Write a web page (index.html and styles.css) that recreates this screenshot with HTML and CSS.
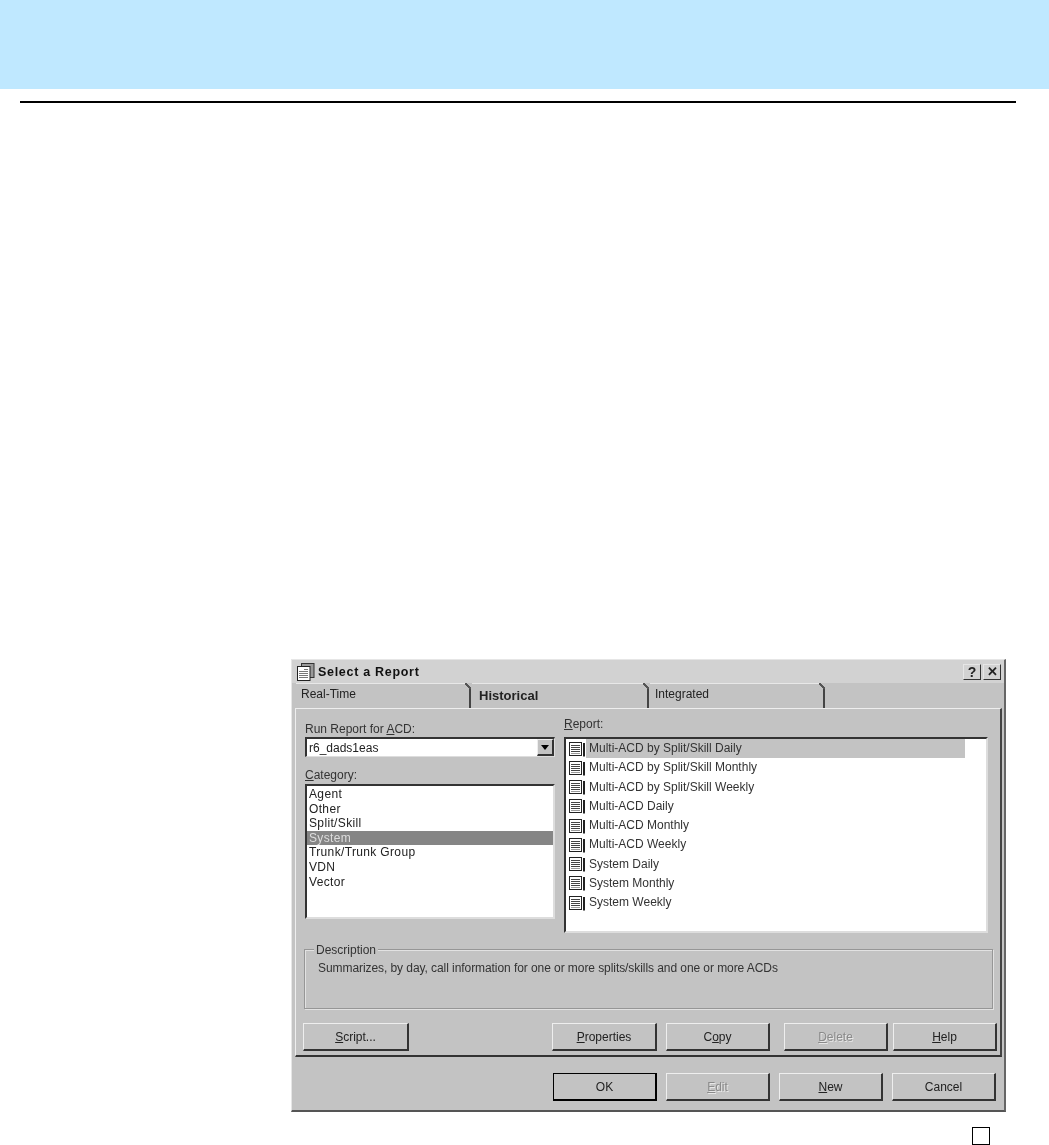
FILE: index.html
```html
<!DOCTYPE html>
<html lang="en">
<head>
  <meta charset="UTF-8" />
  <title>Select a Report</title>
  <link rel="stylesheet" href="styles.css">
</head>
<body>
  <svg class="icon-defs" width="0" height="0" aria-hidden="true">
    <symbol id="report-icon" viewBox="0 0 16 16">
      <rect x="0.5" y="1.5" width="12" height="13" fill="#fff" stroke="#222"/>
      <path d="M2 4.5h9M2 6.5h9M2 8.5h9M2 10.5h9" stroke="#444" fill="none"/>
      <path d="M2 12.5h9" stroke="#999" fill="none"/>
      <path d="M15 2v13.5" stroke="#222" stroke-width="2" fill="none"/>
    </symbol>
  </svg>

  <header class="band"></header>
  <hr class="rule">

  <section class="dialog">
    <div class="title-bar">
      <svg class="title-icon" viewBox="0 0 18 18">
        <rect x="4.5" y="0.5" width="12.5" height="14" fill="#999" stroke="#333"/>
        <rect x="0.5" y="3.5" width="12.5" height="14" fill="#fff" stroke="#222"/>
        <path d="M7 6.5h4M2 8.5h9M2 10.5h9M2 12.5h9M2 14.5h9" stroke="#777" fill="none"/>
      </svg>
      <span class="title-text">Select a Report</span>
      <span class="title-btn">?</span>
      <span class="title-btn title-close">✕</span>
    </div>

    <nav class="tabs">
      <div class="tab">Real-Time</div>
      <div class="tab tab-active">Historical</div>
      <div class="tab">Integrated</div>
    </nav>

    <div class="panel">
      <div class="columns">
        <div class="col-left">
          <label class="field-label">Run Report for <u>A</u>CD:</label>
          <div class="combo">
            <span class="combo-value">r6_dads1eas</span>
            <span class="combo-arrow"></span>
          </div>
          <label class="field-label category-label"><u>C</u>ategory:</label>
          <ul class="list category-list">
            <li>Agent</li>
            <li>Other</li>
            <li>Split/Skill</li>
            <li class="selected">System</li>
            <li>Trunk/Trunk Group</li>
            <li>VDN</li>
            <li>Vector</li>
          </ul>
        </div>
        <div class="col-right">
          <label class="field-label report-label"><u>R</u>eport:</label>
          <ul class="list report-list">
            <li class="selected"><svg class="row-icon"><use href="#report-icon"/></svg><span>Multi-ACD by Split/Skill Daily</span></li>
            <li><svg class="row-icon"><use href="#report-icon"/></svg><span>Multi-ACD by Split/Skill Monthly</span></li>
            <li><svg class="row-icon"><use href="#report-icon"/></svg><span>Multi-ACD by Split/Skill Weekly</span></li>
            <li><svg class="row-icon"><use href="#report-icon"/></svg><span>Multi-ACD Daily</span></li>
            <li><svg class="row-icon"><use href="#report-icon"/></svg><span>Multi-ACD Monthly</span></li>
            <li><svg class="row-icon"><use href="#report-icon"/></svg><span>Multi-ACD Weekly</span></li>
            <li><svg class="row-icon"><use href="#report-icon"/></svg><span>System Daily</span></li>
            <li><svg class="row-icon"><use href="#report-icon"/></svg><span>System Monthly</span></li>
            <li><svg class="row-icon"><use href="#report-icon"/></svg><span>System Weekly</span></li>
          </ul>
        </div>
      </div>

      <div class="group">
        <span class="group-legend">Description</span>
        <p class="group-text">Summarizes, by day, call information for one or more splits/skills and one or more ACDs</p>
      </div>

      <div class="button-row">
        <button class="btn btn-script"><u>S</u>cript...</button>
        <button class="btn btn-properties"><u>P</u>roperties</button>
        <button class="btn btn-copy">C<u>o</u>py</button>
        <button class="btn btn-delete" disabled><u>D</u>elete</button>
        <button class="btn btn-help"><u>H</u>elp</button>
      </div>
    </div>

    <div class="dialog-actions">
      <button class="btn btn-default">OK</button>
      <button class="btn" disabled><u>E</u>dit</button>
      <button class="btn"><u>N</u>ew</button>
      <button class="btn">Cancel</button>
    </div>
  </section>

  <div class="page-box"></div>
</body>
</html>
```

FILE: styles.css
```css
html, body {
  margin: 0;
  padding: 0;
}

body {
  height: 1145px;
  overflow: hidden;
  background: #fff;
  font-family: "Liberation Sans", Arial, sans-serif;
  font-size: 12px;
  color: #222;
}

.icon-defs {
  display: block;
  height: 0;
}

.band {
  height: 89px;
  background-color: #bfe8ff;
}

.rule {
  height: 2px;
  margin: 12px 33px 0 20px;
  border: none;
  background: #000;
}

.dialog {
  box-sizing: border-box;
  width: 715px;
  height: 453px;
  margin: 556px 0 0 291px;
  background: #c3c3c3;
  border-top: 1px solid #e6e6e6;
  border-left: 1px solid #e6e6e6;
  border-right: 2px solid #666;
  border-bottom: 2px solid #555;
  filter: blur(0.35px);
}

.title-bar {
  display: flex;
  align-items: center;
  height: 23px;
  padding: 0 3px 0 5px;
  background: #d2d2d2;
}

.title-icon {
  width: 18px;
  height: 18px;
  margin-right: 3px;
}

.title-text {
  flex: 1;
  font-size: 12.5px;
  font-weight: bold;
  letter-spacing: 0.7px;
  color: #111;
}

.title-btn {
  box-sizing: border-box;
  width: 18px;
  height: 16px;
  margin-left: 2px;
  text-align: center;
  line-height: 14px;
  font-weight: bold;
  font-size: 14px;
  background: #d2d2d2;
  border-top: 1px solid #e6e6e6;
  border-left: 1px solid #e6e6e6;
  border-right: 1px solid #333;
  border-bottom: 1px solid #333;
}

.title-close {
  font-size: 13px;
}

.tabs {
  display: flex;
  height: 25px;
  padding-left: 4px;
}

.tab {
  position: relative;
  box-sizing: border-box;
  width: 175px;
  height: 25px;
  margin-right: 1px;
  padding: 3px 0 0 5px;
  background: #c3c3c3;
  border-top: 1px solid #e8e8e8;
  border-right: 2px solid #444;
  font-size: 12px;
}

.tab::after {
  content: "";
  position: absolute;
  top: -1px;
  right: -2px;
  width: 6px;
  height: 6px;
  background: linear-gradient(45deg, transparent 38%, #555 38%, #555 62%, #c3c3c3 62%);
}

.tab-active {
  width: 177px;
  padding: 4px 0 0 7px;
  font-size: 13px;
  font-weight: bold;
}

.panel {
  box-sizing: border-box;
  height: 349px;
  margin: 0 2px 0 3px;
  padding: 7px 12px 0 9px;
  border-top: 1px solid #eee;
  border-left: 1px solid #eee;
  border-right: 2px solid #444;
  border-bottom: 2px solid #333;
}

.columns {
  display: grid;
  grid-template-columns: 250px 424px;
  column-gap: 9px;
  height: 217px;
}

.field-label {
  display: block;
  line-height: 16px;
  font-size: 12px;
  color: #333;
}

.col-left {
  padding-top: 5px;
}

.report-label {
  height: 21px;
}

.category-label {
  height: 18px;
  margin-top: 9px;
  padding-top: 1px;
  box-sizing: border-box;
}

.combo {
  box-sizing: border-box;
  display: flex;
  align-items: center;
  justify-content: space-between;
  height: 20px;
  background: #fff;
  border-top: 2px solid #333;
  border-left: 2px solid #333;
  border-right: 1px solid #ddd;
  border-bottom: 1px solid #ddd;
}

.combo-value {
  padding-left: 2px;
}

.combo-arrow {
  box-sizing: border-box;
  position: relative;
  width: 17px;
  height: 17px;
  background: #c3c3c3;
  border-top: 1px solid #eee;
  border-left: 1px solid #eee;
  border-right: 2px solid #333;
  border-bottom: 2px solid #333;
}

.combo-arrow::after {
  content: "";
  position: absolute;
  top: 5px;
  left: 3px;
  border-top: 5px solid #000;
  border-left: 4px solid transparent;
  border-right: 4px solid transparent;
}

.list {
  box-sizing: border-box;
  margin: 0;
  padding: 0;
  list-style: none;
  background: #fff;
  border-top: 2px solid #333;
  border-left: 2px solid #333;
  border-right: 2px solid #ddd;
  border-bottom: 2px solid #ddd;
}

.category-list {
  height: 135px;
  padding-top: 1px;
  letter-spacing: 0.35px;
}

.category-list li {
  height: 14.6px;
  line-height: 14.6px;
  padding-left: 2px;
}

.category-list .selected {
  background: #858585;
  color: #ddd;
}

.report-list {
  height: 196px;
}

.report-list li {
  display: flex;
  align-items: center;
  height: 19.25px;
  padding-left: 3px;
  color: #333;
}

.report-list .selected span {
  background: #c3c3c3;
}

.report-list .selected {
  margin-right: 21px;
  background: linear-gradient(90deg, #fff 20px, #c3c3c3 20px);
}

.report-list span {
  line-height: 19px;
  padding-left: 1px;
}

.row-icon {
  width: 16px;
  height: 16px;
  margin-right: 3px;
}

.group {
  position: relative;
  box-sizing: border-box;
  width: 689px;
  height: 60px;
  margin: 16px 0 0 -1px;
  padding: 10px 0 0 13px;
  border: 1px solid #969696;
  box-shadow: inset 1px 1px 0 #e2e2e2, 1px 1px 0 #e2e2e2;
}

.group-legend {
  position: absolute;
  top: -7px;
  left: 9px;
  padding: 0 2px;
  background: #c3c3c3;
  color: #333;
}

.group-text {
  margin: 0;
  line-height: 16px;
  letter-spacing: -0.07px;
  color: #333;
}

.button-row {
  display: flex;
  margin: 14px 0 0 -2px;
}

.dialog-actions {
  display: flex;
  gap: 9px;
  padding: 16px 0 0 261px;
}

.btn {
  flex: none;
  box-sizing: border-box;
  width: 104px;
  height: 28px;
  padding: 0;
  background: #c3c3c3;
  border-top: 1px solid #eee;
  border-left: 1px solid #eee;
  border-right: 2px solid #333;
  border-bottom: 2px solid #333;
  border-radius: 0;
  font-family: "Liberation Sans", Arial, sans-serif;
  font-size: 12px;
  color: #222;
}

.btn:disabled {
  color: #8a8a8a;
  text-shadow: 1px 1px 0 #e8e8e8;
}

.btn-default {
  border: 2px solid #000;
  border-top-width: 1px;
  border-left-width: 1px;
  border-bottom-width: 2px;
}

.btn-script {
  width: 106px;
}

.btn-properties {
  width: 105px;
  margin-left: 143px;
}

.btn-copy {
  margin-left: 9px;
}

.btn-delete {
  margin-left: 14px;
}

.btn-help {
  margin-left: 5px;
}

.page-box {
  box-sizing: border-box;
  width: 18px;
  height: 18px;
  margin: 15px 0 0 972px;
  border: 1px solid #000;
}
```
